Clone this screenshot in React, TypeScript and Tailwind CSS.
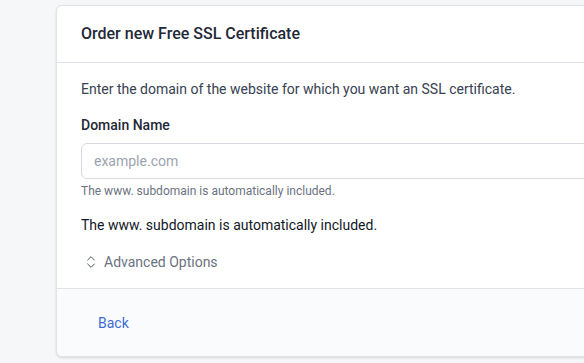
import { ChevronsUpDown } from 'lucide-react';

export default function App() {
  return (
    <div className="min-h-[363px] w-[584px] overflow-hidden bg-[#f6f7f9] pl-[56px] pt-[5px] font-['Roboto',sans-serif]">
      <div className="w-[600px] overflow-hidden rounded-md border border-[#e1e3e8] bg-white shadow-sm">
        <div className="flex h-[57px] items-center border-b border-[#e1e3e8] px-6">
          <h2 className="text-base font-medium text-[#1f2937]">Order new Free SSL Certificate</h2>
        </div>
        <div className="px-6 pb-4 pt-4">
          <p className="text-sm leading-5 text-[#374151]">
            Enter the domain of the website for which you want an SSL certificate.
          </p>
          <label className="mt-4 block text-sm font-medium leading-5 text-[#1f2937]">Domain Name</label>
          <input
            type="text"
            placeholder="example.com"
            className="mt-2 block h-9 w-full rounded-md border border-[#d8dbe1] px-3 text-sm text-[#1f2937] placeholder:text-[#9ca3af] focus:outline-none"
          />
          <p className="mt-1 text-xs leading-4 text-[#6b7280]">The www. subdomain is automatically included.</p>
          <p className="mt-4 text-sm leading-5 text-[#111827]">The www. subdomain is automatically included.</p>
          <button type="button" className="mt-[17px] flex items-center gap-[5px] pl-[2px] text-sm leading-5 text-[#6b7280]">
            <ChevronsUpDown size={16} strokeWidth={1.5} className="text-[#4b5563]" />
            Advanced Options
          </button>
        </div>
        <div className="flex h-[68px] items-center border-t border-[#e1e3e8] bg-[#fafbfc] px-6">
          <button type="button" className="h-9 px-[17px] text-sm text-[#3b6bd6]">
            Back
          </button>
        </div>
      </div>
    </div>
  );
}
